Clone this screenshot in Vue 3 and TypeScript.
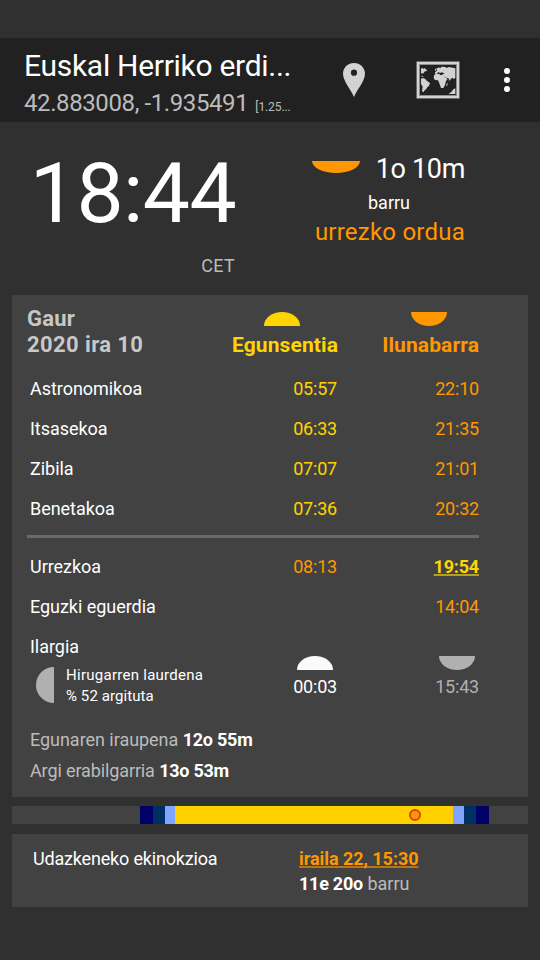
<script setup lang="ts">
interface SunRow {
  label: string
  rise: string
  set: string
}

interface Segment {
  width: number
  color: string
}

const twilight: SunRow[] = [
  { label: 'Astronomikoa', rise: '05:57', set: '22:10' },
  { label: 'Itsasekoa', rise: '06:33', set: '21:35' },
  { label: 'Zibila', rise: '07:07', set: '21:01' },
  { label: 'Benetakoa', rise: '07:36', set: '20:32' },
]

const segments: Segment[] = [
  { width: 128, color: '#424242' },
  { width: 13, color: '#000066' },
  { width: 12, color: '#003063' },
  { width: 10, color: '#80a5ff' },
  { width: 278, color: '#ffd000' },
  { width: 11, color: '#80a5ff' },
  { width: 12, color: '#003063' },
  { width: 13, color: '#000066' },
  { width: 39, color: '#424242' },
]
</script>

<template>
  <main class="screen">
    <header class="bar">
      <div class="place">
        <div class="title">Euskal Herriko erdi...</div>
        <div class="coords"><span class="latlon">42.883008, -1.935491</span><span class="accuracy">[1.25...</span></div>
      </div>
      <svg class="pin" viewBox="0 0 22 34">
        <path fill="#d2d2d2" fill-rule="evenodd" d="M11 0C4.9 0 0 4.7 0 10.6C0 18.5 7.6 26 11 34C14.4 26 22 18.5 22 10.6C22 4.7 17.1 0 11 0ZM11 6.6a3.1 3.1 0 1 1 0 6.2a3.1 3.1 0 1 1 0-6.2Z" />
      </svg>
      <svg class="map" viewBox="0 0 132 114">
        <rect x="1" y="1" width="130" height="112" fill="#8f8f8f" />
        <rect x="3" y="3" width="126" height="108" fill="#d2d2d2" />
        <rect x="9" y="9" width="114" height="96" fill="#8f8f8f" />
        <rect x="12" y="12" width="108" height="90" fill="#212121" />
        <g fill="#d2d2d2">
          <path d="M15 23L20 21L23 24L25 21L30 25L34 30L27 31L23 36L18 38L15 36Z" />
          <path d="M15 44L20 45L23 48L18 47Z" />
          <path d="M15 53L21 51L28 54L32 59L42 66L39 74L34 79L30 85L24 90L23 94L18 91L20 77L15 69Z" />
          <path d="M54 43L60 38L69 38L73 42L84 42L88 50L95 53L90 60L87 72L82 81L75 81L70 67L66 58L57 57L53 51Z" />
          <path d="M57 34L63 29L61 24L68 19L73 22L76 17L88 18L91 21L99 18L118 22V51L113 54L109 50L105 53L101 60L97 51L89 50L83 42L77 40L86 38L78 34L72 36L67 33L62 38L57 38Z" />
          <path d="M57 25L61 22L60 29L57 29Z" />
          <path d="M92 68L95 65L94 74L91 76Z" />
          <path d="M98 98L106 93L112 85L118 82V99H99Z" />
        </g>
      </svg>
      <div class="more"><i></i><i></i><i></i></div>
    </header>

    <section class="now">
      <div class="clock">
        <div class="time">18:44</div>
        <div class="zone">CET</div>
      </div>
      <div class="next">
        <div class="countdown"><i class="half down wide"></i><span class="remain">1o 10m</span></div>
        <div class="in">barru</div>
        <div class="event">urrezko ordua</div>
      </div>
    </section>

    <section class="card day">
      <div class="row head">
        <div class="date"><span class="today">Gaur</span><br /><span class="ymd">2020 ira 10</span></div>
        <div class="col rise"><i class="half up"></i><b class="sunrise">Egunsentia</b></div>
        <div class="col set"><i class="half down"></i><b class="sunset">Ilunabarra</b></div>
      </div>
      <div v-for="r in twilight" :key="r.label" class="row">
        <span class="label">{{ r.label }}</span>
        <span class="rise">{{ r.rise }}</span>
        <span class="set">{{ r.set }}</span>
      </div>
      <hr />
      <div class="row">
        <span class="label">Urrezkoa</span>
        <span class="set first">08:13</span>
        <span class="set"><b class="active">19:54</b></span>
      </div>
      <div class="row">
        <span class="label">Eguzki eguerdia</span>
        <span></span>
        <span class="set">14:04</span>
      </div>
      <div class="row moon">
        <div>
          <div class="label">Ilargia</div>
          <div class="phase">
            <i class="quarter"></i>
            <div class="lines"><span class="pname">Hirugarren laurdena</span><br />% 52 argituta</div>
          </div>
        </div>
        <div class="mcol first"><i class="half up white"></i><span>00:03</span></div>
        <div class="mcol grey"><i class="half down silver"></i><span>15:43</span></div>
      </div>
      <div class="length">Egunaren iraupena <b>12o 55m</b></div>
      <div class="length usable">Argi erabilgarria <b>13o 53m</b></div>
    </section>

    <section class="strip">
      <i v-for="(s, i) in segments" :key="i" :style="{ width: s.width + 'px', background: s.color }"></i>
      <span class="sun"></span>
    </section>

    <section class="card season">
      <div class="sname">Udazkeneko ekinokzioa</div>
      <div>
        <div><b class="when">iraila 22, 15:30</b></div>
        <div class="until"><b>11e 20o</b> barru</div>
      </div>
    </section>
  </main>
</template>

<style>
body {
  background: #303030;
}
</style>

<style scoped>
.screen {
  box-sizing: border-box;
  width: 540px;
  height: 960px;
  padding-top: 38px;
  overflow: hidden;
  background: #303030;
  color: #fff;
  font-family: Roboto, sans-serif;
  font-size: 18px;
  white-space: nowrap;
}
i {
  display: block;
}
.bar {
  display: flex;
  height: 84px;
  background: #212121;
}
.place {
  width: 319px;
  padding: 8px 0 0 24px;
}
.title {
  font-size: 30px;
  line-height: 40px;
  letter-spacing: -0.29px;
}
.coords {
  display: flex;
  align-items: baseline;
  font-size: 24px;
  line-height: 34px;
  color: #bcbcbc;
}
.latlon {
  letter-spacing: -0.4px;
}
.accuracy {
  margin-left: 7px;
  font-size: 12px;
  letter-spacing: -0.1px;
}
.pin {
  width: 22px;
  height: 34px;
  margin-top: 25px;
}
.map {
  width: 44px;
  height: 38px;
  margin: 23px 0 0 51px;
}
.more {
  display: grid;
  gap: 3px;
  align-content: start;
  margin: 30px 0 0 44px;
}
.more i {
  width: 6px;
  height: 6px;
  border-radius: 50%;
  background: #fff;
}
.now {
  display: flex;
  height: 173px;
}
.clock {
  width: 235px;
  padding-top: 22px;
  text-align: right;
}
.time {
  margin-right: -1px;
  font-size: 84px;
  line-height: 100px;
  letter-spacing: -0.6px;
}
.zone {
  line-height: 24px;
  margin-top: 10px;
  letter-spacing: 0.3px;
  color: #bcbcbc;
}
.next {
  width: 230px;
  padding-top: 30px;
}
.countdown {
  display: flex;
  justify-content: flex-end;
  line-height: 34px;
  font-size: 27px;
}
.remain {
  margin-left: 16px;
  letter-spacing: -0.35px;
}
.in {
  padding-left: 133px;
  line-height: 34px;
}
.event {
  margin-top: -1px;
  text-align: right;
  font-size: 24px;
  line-height: 26px;
  letter-spacing: 0.23px;
  color: #ff9800;
}
.half {
  width: 36px;
  height: 14px;
}
.up {
  border-radius: 18px 18px 0 0 / 14px 14px 0 0;
  background: #ffd500;
}
.down {
  border-radius: 0 0 18px 18px / 0 0 14px 14px;
  background: #ff9800;
}
.wide {
  width: 48px;
  height: 12px;
  margin-top: 9px;
  border-radius: 0 0 24px 24px / 0 0 12px 12px;
}
.white {
  background: #fafafa;
}
.silver {
  background: #b0b0b0;
}
.card {
  box-sizing: border-box;
  margin: 0 12px;
  background: #424242;
}
.day {
  height: 502px;
  padding: 10px 49px 0 15px;
}
.row {
  display: grid;
  grid-template-columns: 171px 140px 141px;
  line-height: 40px;
}
.row > .rise,
.row > .set {
  text-align: right;
}
.row > span.rise,
.row > span.first {
  padding-right: 1px;
}
.row > span.rise,
.row > span.set,
.mcol {
  letter-spacing: -0.2px;
}
.label {
  padding-left: 3px;
  letter-spacing: -0.04px;
}
.rise {
  color: #ffd500;
}
.set {
  color: #ff9800;
}
.head {
  height: 64px;
}
.date {
  padding-top: 1px;
  font-size: 22px;
  line-height: 26px;
  font-weight: 700;
  color: #c8c8c8;
}
.today {
  letter-spacing: 0.25px;
}
.ymd {
  letter-spacing: 0.4px;
}
.col {
  display: grid;
  align-content: start;
  font-size: 21px;
  line-height: 26px;
  letter-spacing: 0.1px;
}
.col .half {
  margin: 7px 0 6px;
}
.col.rise .half {
  margin-left: 66px;
}
.col.set .half {
  margin-left: 73px;
}
hr {
  height: 3px;
  margin: 6px 0 9px;
  border: 0;
  background: #696969;
}
.active,
.when {
  text-decoration: underline 2px;
  text-underline-offset: 1px;
  text-decoration-skip-ink: none;
}
.active {
  color: #ffd500;
  text-decoration-color: #b69f1c;
}
.moon {
  height: 97px;
}
.phase {
  display: flex;
  font-size: 15px;
  line-height: 21px;
  letter-spacing: 0.08px;
}
.pname {
  letter-spacing: 0.27px;
}
.quarter {
  flex: none;
  width: 18px;
  height: 36px;
  margin: 0 12px 0 9px;
  border-radius: 18px 0 0 18px;
  background: #b0b0b0;
}
.lines {
  flex: none;
  margin-top: -2px;
}
.mcol {
  display: grid;
  justify-items: end;
  align-content: start;
  padding-top: 29px;
  line-height: 34px;
}
.mcol.first {
  padding-right: 1px;
}
.mcol .half {
  margin-right: 4px;
}
.grey {
  color: #b0b0b0;
}
.length {
  padding-left: 3px;
  line-height: 31px;
  letter-spacing: -0.04px;
  color: #bcbcbc;
}
.usable {
  letter-spacing: -0.12px;
}
.length b,
.until b {
  color: #fff;
  letter-spacing: -0.25px;
}
.strip {
  position: relative;
  display: flex;
  height: 18px;
  margin: 9px 12px 10px;
}
.sun {
  position: absolute;
  box-sizing: border-box;
  left: 397px;
  top: 3px;
  width: 12px;
  height: 12px;
  border: 2px solid #d04a00;
  border-radius: 50%;
  background: #ff9800;
}
.season {
  display: grid;
  grid-template-columns: 266px auto;
  height: 73px;
  padding: 12px 0 0 21px;
  line-height: 25px;
}
.sname {
  letter-spacing: -0.18px;
}
.when {
  color: #ff9800;
  letter-spacing: -0.05px;
  text-decoration-color: #b3741a;
}
.until {
  color: #bcbcbc;
}
</style>
